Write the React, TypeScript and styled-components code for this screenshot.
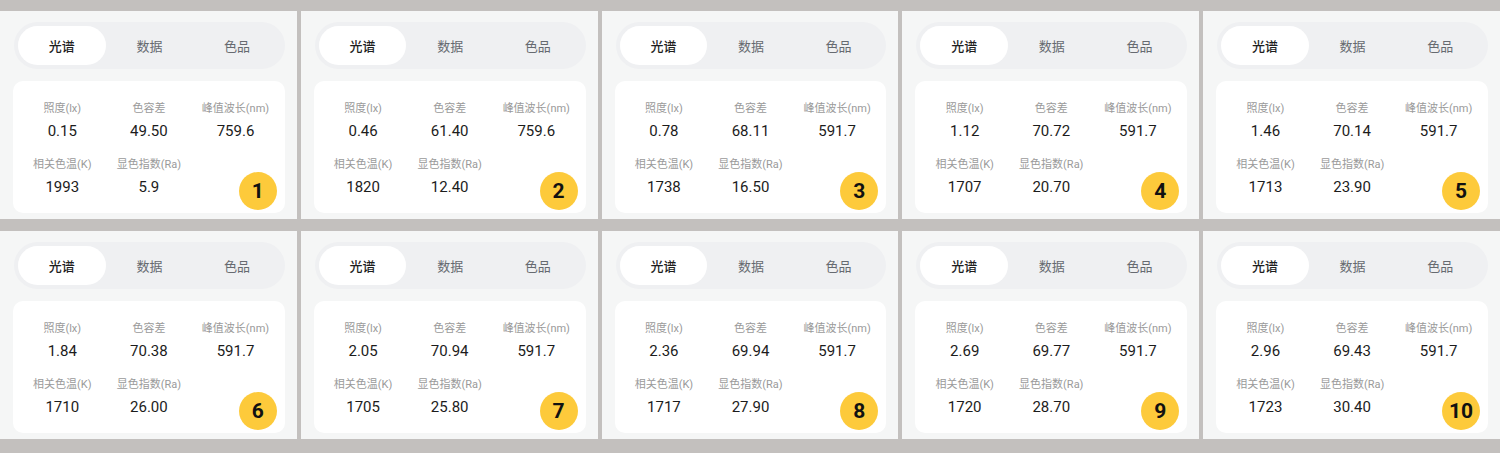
import { createGlobalStyle, styled } from "styled-components"

const GlobalStyle = createGlobalStyle`
  html, body {
    margin: 0;
    padding: 0;
    background: #c3c0be;
  }
  body {
    font-family: Roboto, "Noto Sans CJK SC", sans-serif;
  }
`

const Board = styled.div`
  display: grid;
  grid-template-columns: repeat(5, 1fr);
  grid-template-rows: 208px 208px;
  column-gap: 4px;
  row-gap: 12px;
  padding: 11px 0 14px;
  width: 1500px;
  height: 453px;
  box-sizing: border-box;
`

const Card = styled.div`
  display: flex;
  flex-direction: column;
  gap: 12px;
  padding: 11px 12px 0 13px;
  background: #f5f6f6;
  box-sizing: border-box;
`

const Tabs = styled.div`
  display: grid;
  grid-template-columns: repeat(3, 1fr);
  height: 47px;
  padding: 4px;
  margin-left: 1px;
  border-radius: 24px;
  background: #eff0f2;
  box-sizing: border-box;
`

const Tab = styled.div<{ $active?: boolean }>`
  display: flex;
  align-items: center;
  justify-content: center;
  border-radius: 20px;
  font-size: 13px;
  font-weight: ${(p) => (p.$active ? 500 : 400)};
  color: ${(p) => (p.$active ? "#1f1f1f" : "#666a70")};
  background: ${(p) => (p.$active ? "#ffffff" : "transparent")};
`

const Panel = styled.div`
  position: relative;
  display: grid;
  grid-template-columns: repeat(3, 1fr);
  row-gap: 17px;
  height: 132px;
  padding: 21px 6px 0;
  border-radius: 10px;
  background: #ffffff;
  box-sizing: border-box;
  align-content: start;
`

const Cell = styled.div`
  display: flex;
  flex-direction: column;
  align-items: center;
  gap: 5px;
`

const Label = styled.span`
  font-size: 11px;
  line-height: 14px;
  color: #9a9a9a;
  white-space: nowrap;
`

const Value = styled.span`
  font-size: 15px;
  line-height: 20px;
  color: #1c1c1c;
`

const Badge = styled.div`
  position: absolute;
  right: 8px;
  bottom: 3px;
  width: 38px;
  height: 38px;
  border-radius: 50%;
  background: #fdca3b;
  display: flex;
  align-items: center;
  justify-content: center;
  font-size: 21px;
  font-weight: 700;
  color: #111;
`

type Reading = [string, string, string, string, string]

const readings: Reading[] = [
  ["0.15", "49.50", "759.6", "1993", "5.9"],
  ["0.46", "61.40", "759.6", "1820", "12.40"],
  ["0.78", "68.11", "591.7", "1738", "16.50"],
  ["1.12", "70.72", "591.7", "1707", "20.70"],
  ["1.46", "70.14", "591.7", "1713", "23.90"],
  ["1.84", "70.38", "591.7", "1710", "26.00"],
  ["2.05", "70.94", "591.7", "1705", "25.80"],
  ["2.36", "69.94", "591.7", "1717", "27.90"],
  ["2.69", "69.77", "591.7", "1720", "28.70"],
  ["2.96", "69.43", "591.7", "1723", "30.40"],
]

const labels = ["照度(lx)", "色容差", "峰值波长(nm)", "相关色温(K)", "显色指数(Ra)"]

function SpectrumCard({ index, data }: { index: number; data: Reading }) {
  return (
    <Card>
      <Tabs>
        <Tab $active>光谱</Tab>
        <Tab>数据</Tab>
        <Tab>色品</Tab>
      </Tabs>
      <Panel>
        {labels.map((label, i) => (
          <Cell key={label}>
            <Label>{label}</Label>
            <Value>{data[i]}</Value>
          </Cell>
        ))}
        <Badge>{index}</Badge>
      </Panel>
    </Card>
  )
}

export default function App() {
  return (
    <>
      <GlobalStyle />
      <Board>
        {readings.map((r, i) => (
          <SpectrumCard key={i} index={i + 1} data={r} />
        ))}
      </Board>
    </>
  )
}
